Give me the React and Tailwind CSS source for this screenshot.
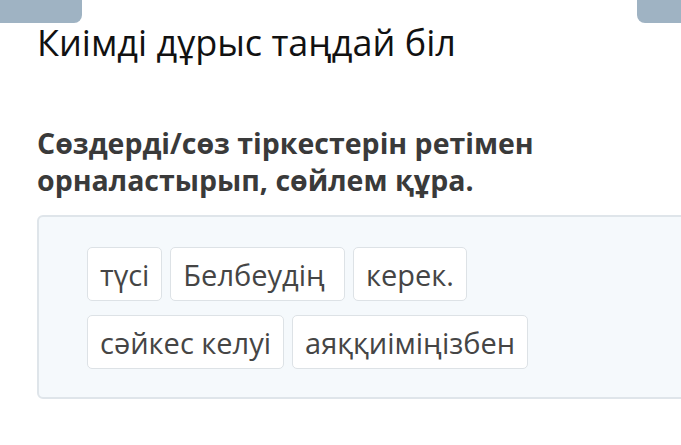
import React from "react";

const words = [
  ["түсі", "Белбеудің", "керек."],
  ["сәйкес келуі", "аяққиіміңізбен"],
];

const Chip = ({ text }) => (
  <div
    className={
      "h-[54px] flex items-center pl-[12px] bg-white border border-[#dde2e6] rounded-[5px] text-[29px] text-[#454545] leading-none " +
      (text === "Белбеудің" ? "pr-[19px]" : "pr-[12px]")
    }
  >
    {text}
  </div>
);

const App = () => {
  return (
    <div
      className="w-[681px] h-[445px] bg-white overflow-hidden relative"
      style={{ fontFamily: '"Open Sans", "Noto Sans", sans-serif' }}
    >
      <div className="flex justify-between h-[23px]">
        <div className="w-[82px] h-full bg-[#9fb3c3] rounded-br-[8px]" />
        <div className="w-[44px] h-full bg-[#9fb3c3] rounded-bl-[8px]" />
      </div>

      <div className="pl-[37px]">
        <h1 className="text-[36px] text-[#111] leading-[40px] font-normal">
          Киімді дұрыс таңдай біл
        </h1>

        <p className="mt-[62px] text-[28.5px] font-bold text-[#3a3a3a] leading-[37px]">
          Сөздерді/сөз тіркестерін ретімен
          <br />
          орналастырып, сөйлем құра.
        </p>

        <div className="mt-[16px] h-[184px] w-[660px] bg-[#f5f9fc] border-2 border-[#dfe5ea] rounded-[6px] pl-[48px] pt-[30px] flex flex-col gap-[14px]">
          {words.map((row, i) => (
            <div key={i} className="flex gap-[8px]">
              {row.map((w) => (
                <Chip key={w} text={w} />
              ))}
            </div>
          ))}
        </div>
      </div>
    </div>
  );
};

export default App;
